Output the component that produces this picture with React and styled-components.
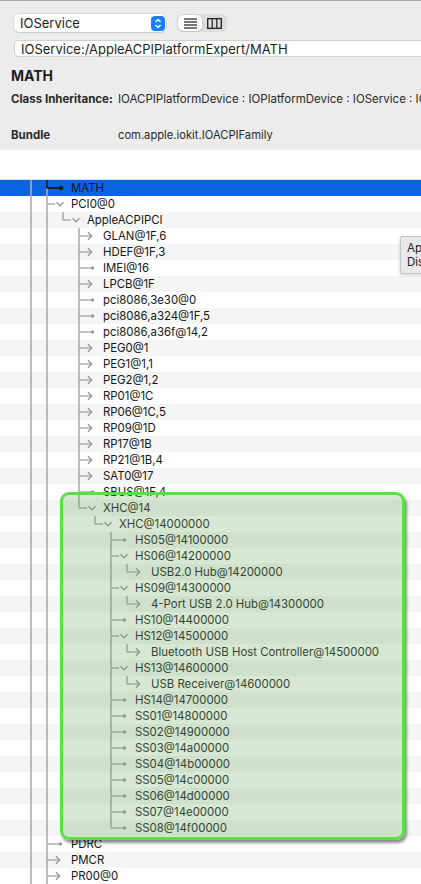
import React from "react";
import styled, { createGlobalStyle } from "styled-components";

const GlobalStyle = createGlobalStyle`
  html, body {
    margin: 0;
    padding: 0;
    background: #fff;
    overflow: hidden;
  }
  body {
    font-family: Inter, "Liberation Sans", Arial, sans-serif;
    color: #1d1d1d;
  }
`;

const Window = styled.div`
  width: 421px;
  height: 884px;
  overflow: hidden;
  background: #fff;
`;

const Pane = styled.div`
  background: #ececec;
  border-top: 1px solid #a8a8a8;
  padding: 13px 0 8px 11px;
  height: 150px;
  box-sizing: border-box;
`;

const Controls = styled.div`
  display: flex;
  align-items: center;
  gap: 11px;
  margin-left: 3px;
`;

const Select = styled.div`
  width: 152px;
  height: 18px;
  box-sizing: border-box;
  display: flex;
  align-items: center;
  justify-content: space-between;
  padding: 0 1px 0 6px;
  background: #fff;
  border-radius: 5px;
  box-shadow: 0 0 0 0.5px #c4c4c4, 0 1px 1px rgba(0, 0, 0, 0.12);
  font-size: 13px;
`;

const Stepper = styled.div`
  width: 14px;
  height: 15px;
  border-radius: 4px;
  background: #1a7ff5;
  display: flex;
  align-items: center;
  justify-content: center;
`;

const Segmented = styled.div`
  display: flex;
  height: 18px;
  padding: 1px;
  box-sizing: border-box;
  background: #dcdcdc;
  border-radius: 6px;
  width: 50px;
`;

const Segment = styled.div`
  flex: 1;
  display: flex;
  align-items: center;
  justify-content: center;
  border-radius: 5px;
  background: ${({ $active }) => ($active ? "#fff" : "transparent")};
  box-shadow: ${({ $active }) =>
    $active ? "0 0 0 0.5px #c8c8c8, 0 1px 1px rgba(0,0,0,0.15)" : "none"};
`;

const PathField = styled.div`
  margin: 8px 0 0 3px;
  width: 420px;
  height: 17px;
  box-sizing: border-box;
  padding-left: 6px;
  display: flex;
  align-items: center;
  background: #fff;
  border: 1px solid #d0d0d0;
  border-radius: 4px;
  font-size: 13px;
  white-space: nowrap;
`;

const Title = styled.div`
  margin-top: 11px;
  font-size: 14px;
  line-height: 16px;
  font-weight: 700;
`;

const InfoRow = styled.div`
  display: flex;
  margin-top: ${({ $gap }) => $gap}px;
  font-size: 11.5px;
  line-height: 14px;
  white-space: nowrap;
`;

const InfoLabel = styled.div`
  width: 107px;
  flex: none;
  font-weight: 700;
  color: #2a2a2a;
`;

const InfoValue = styled.div`
  color: #2a2a2a;
  font-size: ${({ $small }) => ($small ? "11.2px" : "inherit")};
`;

const Spacer = styled.div`
  height: 29px;
  border-bottom: 1px solid #e0e0e0;
`;

const TreeArea = styled.div`
  position: relative;
`;

const Row = styled.div`
  display: flex;
  align-items: center;
  height: 16px;
  background: ${({ $selected, $stripe }) =>
    $selected ? "#0a63e0" : $stripe ? "#f4f5f5" : "#fff"};
  white-space: nowrap;
`;

const Label = styled.span`
  font-size: 11.4px;
  color: #161616;
  line-height: 16px;
`;

const Highlight = styled.div`
  position: absolute;
  left: 60px;
  top: 312px;
  width: 345px;
  height: 348px;
  box-sizing: border-box;
  border: 3px solid #57e33f;
  border-radius: 9px;
  background: rgba(118, 172, 102, 0.29);
  box-shadow: 2px 3px 3px rgba(0, 0, 0, 0.45);
  pointer-events: none;
`;

const Tooltip = styled.div`
  position: absolute;
  left: 400px;
  top: 56px;
  padding: 4px 6px;
  background: #e9e9e9;
  border: 1px solid #c6c6c6;
  border-radius: 2px;
  box-shadow: 0 1px 3px rgba(0, 0, 0, 0.2);
  font-size: 11.5px;
  line-height: 14px;
  color: #222;
  white-space: nowrap;
`;

const leaf = (label) => ({ label, kind: "leaf" });
const closed = (label) => ({ label, kind: "closed" });
const open = (label, children) => ({ label, kind: "open", children });

const tree = [
  { label: "MATH", kind: "leaf", selected: true },
  open("PCI0@0", [
    open("AppleACPIPCI", [
      closed("GLAN@1F,6"),
      closed("HDEF@1F,3"),
      leaf("IMEI@16"),
      closed("LPCB@1F"),
      leaf("pci8086,3e30@0"),
      leaf("pci8086,a324@1F,5"),
      leaf("pci8086,a36f@14,2"),
      closed("PEG0@1"),
      closed("PEG1@1,1"),
      closed("PEG2@1,2"),
      closed("RP01@1C"),
      closed("RP06@1C,5"),
      closed("RP09@1D"),
      closed("RP17@1B"),
      closed("RP21@1B,4"),
      closed("SAT0@17"),
      leaf("SBUS@1F,4"),
      open("XHC@14", [
        open("XHC@14000000", [
          leaf("HS05@14100000"),
          open("HS06@14200000", [closed("USB2.0 Hub@14200000")]),
          open("HS09@14300000", [closed("4-Port USB 2.0 Hub@14300000")]),
          leaf("HS10@14400000"),
          open("HS12@14500000", [closed("Bluetooth USB Host Controller@14500000")]),
          open("HS13@14600000", [closed("USB Receiver@14600000")]),
          leaf("HS14@14700000"),
          leaf("SS01@14800000"),
          leaf("SS02@14900000"),
          leaf("SS03@14a00000"),
          leaf("SS04@14b00000"),
          leaf("SS05@14c00000"),
          leaf("SS06@14d00000"),
          leaf("SS07@14e00000"),
          leaf("SS08@14f00000"),
        ]),
      ]),
    ]),
  ]),
  leaf("PDRC"),
  closed("PMCR"),
  closed("PR00@0"),
];

// the top level keeps going below the window, so its last row is not a corner
function flatten(nodes, depth, guides, out, more) {
  nodes.forEach((n, i) => {
    const last = i === nodes.length - 1 && !more;
    out.push({ ...n, depth, guides, last });
    if (n.children) {
      flatten(n.children, depth + 1, last ? guides : [...guides, depth], out, false);
    }
  });
  return out;
}

const rows = flatten(tree, 2, [1], [], true);

const LINE = "#acacac";
const MARK = "#979797";
const lineX = (d) => 15 + 16 * d;

const Connector = ({ row }) => {
  const x = lineX(row.depth);
  const w = x + 24;
  const sel = row.selected;
  const ink = sel ? "#1a1a1a" : LINE;
  return (
    <svg width={w} height="16" style={{ flex: "none", display: "block" }}>
      {row.guides.map((g) => (
        <line key={g} x1={lineX(g)} y1="0" x2={lineX(g)} y2="16" stroke={LINE} strokeWidth="1.6" />
      ))}
      <line x1={x} y1="0" x2={x} y2="8.6" stroke={ink} strokeWidth="1.6" />
      {!row.last && <line x1={x} y1="8" x2={x} y2="16" stroke={LINE} strokeWidth="1.6" />}
      {row.kind === "leaf" && (
        <>
          <line x1={x} y1="8" x2={x + (sel ? 14 : 12)} y2="8" stroke={ink} strokeWidth={sel ? 1.8 : 1.5} />
          <circle cx={x + (sel ? 14 : 13.5)} cy="8" r={sel ? 2.3 : 1.7} fill={sel ? "#1a1a1a" : MARK} />
        </>
      )}
      {row.kind === "closed" && (
        <>
          <line x1={x} y1="8" x2={x + 12} y2="8" stroke={LINE} strokeWidth="1.5" />
          <polyline
            points={`${x + 9},4.3 ${x + 12.7},8 ${x + 9},11.7`}
            fill="none"
            stroke={MARK}
            strokeWidth="1.4"
          />
        </>
      )}
      {row.kind === "open" && (
        <>
          <line x1={x} y1="8" x2={x + 8} y2="8" stroke={LINE} strokeWidth="1.5" />
          <polyline
            points={`${x + 9.5},6.3 ${x + 13},9.8 ${x + 16.5},6.3`}
            fill="none"
            stroke={MARK}
            strokeWidth="1.4"
          />
        </>
      )}
    </svg>
  );
};

const StepperIcon = () => (
  <svg width="8" height="11" viewBox="0 0 8 11">
    <polyline points="1.5,4 4,1.5 6.5,4" fill="none" stroke="#fff" strokeWidth="1.4" />
    <polyline points="1.5,7 4,9.5 6.5,7" fill="none" stroke="#fff" strokeWidth="1.4" />
  </svg>
);

const ListIcon = () => (
  <svg width="13" height="11" viewBox="0 0 13 11">
    {[1, 4, 7, 10].map((y) => (
      <line key={y} x1="0" y1={y} x2="13" y2={y} stroke="#1e1e1e" strokeWidth="1.2" />
    ))}
  </svg>
);

const ColumnsIcon = () => (
  <svg width="15" height="11" viewBox="0 0 15 11">
    <rect x="0.7" y="0.7" width="13.6" height="9.6" fill="none" stroke="#1e1e1e" strokeWidth="1.3" />
    <line x1="5.2" y1="0.7" x2="5.2" y2="10.3" stroke="#1e1e1e" strokeWidth="1.2" />
    <line x1="9.8" y1="0.7" x2="9.8" y2="10.3" stroke="#1e1e1e" strokeWidth="1.2" />
  </svg>
);

export default function App() {
  return (
    <>
      <GlobalStyle />
      <Window>
        <Pane>
          <Controls>
            <Select>
              IOService
              <Stepper>
                <StepperIcon />
              </Stepper>
            </Select>
            <Segmented>
              <Segment $active>
                <ListIcon />
              </Segment>
              <Segment>
                <ColumnsIcon />
              </Segment>
            </Segmented>
          </Controls>
          <PathField>IOService:/AppleACPIPlatformExpert/MATH</PathField>
          <Title>MATH</Title>
          <InfoRow $gap={8}>
            <InfoLabel>Class Inheritance:</InfoLabel>
            <InfoValue>IOACPIPlatformDevice : IOPlatformDevice : IOService : IORegistryEntry</InfoValue>
          </InfoRow>
          <InfoRow $gap={22}>
            <InfoLabel>Bundle</InfoLabel>
            <InfoValue $small>com.apple.iokit.IOACPIFamily</InfoValue>
          </InfoRow>
        </Pane>
        <Spacer />
        <TreeArea>
          {rows.map((row, i) => (
            <Row key={row.label} $stripe={i % 2 === 0} $selected={row.selected}>
              <Connector row={row} />
              <Label>{row.label}</Label>
            </Row>
          ))}
          <Highlight />
          <Tooltip>
            AppleACPIPCI
            <br />
            Display
          </Tooltip>
        </TreeArea>
      </Window>
    </>
  );
}
